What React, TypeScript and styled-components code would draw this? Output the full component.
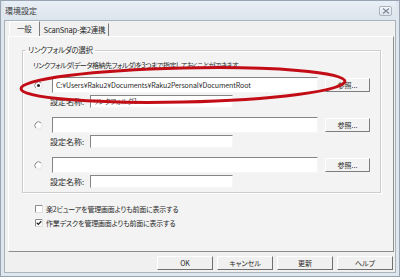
import React from "react";
import styled, { createGlobalStyle } from "styled-components";

const GlobalStyle = createGlobalStyle`
  html, body { margin: 0; padding: 0; background: #fff; }
  body {
    font-family: "Noto Sans CJK JP", "Liberation Sans", sans-serif;
    font-feature-settings: "palt";
    color: #2a2a2a;
  }
  * { box-sizing: border-box; }
`;

type FolderRow = { path: string; name: string; selected: boolean };

const rows: FolderRow[] = [
  { path: "C:¥Users¥Raku2¥Documents¥Raku2Personal¥DocumentRoot", name: "リンクフォルダ1", selected: true },
  { path: "", name: "", selected: false },
  { path: "", name: "", selected: false },
];

const Radio = ({ checked }: { checked: boolean }) => (
  <RadioIcon viewBox="0 0 9 9" width={9} height={9}>
    <circle cx="4.5" cy="4.5" r="3.6" fill="#fff" />
    <path d="M7.1 1.9 A3.6 3.6 0 0 0 1.9 7.1" fill="none" stroke="#8a8a8a" strokeWidth="1" />
    <path d="M1.9 7.1 A3.6 3.6 0 0 0 7.1 1.9" fill="none" stroke="#e2e2e2" strokeWidth="1" />
    {checked && <circle cx="4.5" cy="4.5" r="1.5" fill="#222" />}
  </RadioIcon>
);

const Check = ({ checked }: { checked: boolean }) => (
  <CheckIcon viewBox="0 0 8 8" width={8} height={8}>
    <rect x="0" y="0" width="8" height="8" fill="#fff" />
    <path d="M0.5 7.5 V0.5 H7.5" fill="none" stroke="#8a8a8a" strokeWidth="1" />
    <path d="M7.5 0.5 V7.5 H0.5" fill="none" stroke="#dcdcdc" strokeWidth="1" />
    {checked && <path d="M1.8 3.8 L3.3 5.4 L6.3 2.2" fill="none" stroke="#222" strokeWidth="1.3" />}
  </CheckIcon>
);

export default function App() {
  return (
    <>
      <GlobalStyle />
      <Window>
        <TitleBar>
          <Title>環境設定</Title>
          <CloseButton>
            <svg viewBox="0 0 8 6" width={8} height={6}>
              <path d="M1 0.5 L7 5.5 M7 0.5 L1 5.5" stroke="#7d8896" strokeWidth="1.2" />
            </svg>
          </CloseButton>
        </TitleBar>
        <Client>
          <TabStrip>
            <Tab $active>一般</Tab>
            <Tab>ScanSnap-楽2連携</Tab>
          </TabStrip>
          <Panel>
            <Group>
              <Legend>リンクフォルダの選択</Legend>
              <Description>リンクフォルダ(データ格納先フォルダ)を3つまで指定しておくことができます。</Description>
              {rows.map((r, i) => (
                <React.Fragment key={i}>
                  <PathRow $first={i === 0}>
                    <Radio checked={r.selected} />
                    <PathBox>{r.path}</PathBox>
                    <BrowseButton>参照...</BrowseButton>
                  </PathRow>
                  <NameRow>
                    <NameLabel>設定名称:</NameLabel>
                    <NameBox>{r.name}</NameBox>
                  </NameRow>
                </React.Fragment>
              ))}
            </Group>
            <CheckRow $first>
              <Check checked={false} />
              <span>楽2ビューアを管理画面よりも前面に表示する</span>
            </CheckRow>
            <CheckRow>
              <Check checked />
              <span>作業デスクを管理画面よりも前面に表示する</span>
            </CheckRow>
          </Panel>
          <Footer>
            <DialogButton>OK</DialogButton>
            <DialogButton>キャンセル</DialogButton>
            <DialogButton>更新</DialogButton>
            <DialogButton>ヘルプ</DialogButton>
          </Footer>
        </Client>
        <Annotation viewBox="0 0 400 277" width={400} height={277}>
          <ellipse cx="183" cy="85" rx="162" ry="17" transform="rotate(-1.3 183 85)"
            fill="none" stroke="#c30d16" strokeWidth="3" />
        </Annotation>
      </Window>
    </>
  );
}

const Window = styled.div`
  position: relative;
  width: 400px;
  height: 277px;
  border: 1px solid #98a4b2;
  background: #dfe6ee;
  padding: 0 3px 3px 3px;
  display: flex;
  flex-direction: column;
`;

const TitleBar = styled.div`
  height: 19px;
  flex: 0 0 19px;
  display: flex;
  align-items: center;
  justify-content: space-between;
  padding: 0 4px 0 1px;
  background: linear-gradient(#e9eff6, #dbe3ec);
`;

const Title = styled.span`
  font-size: 8px;
  line-height: 10px;
  color: #3a3a3a;
`;

const CloseButton = styled.div`
  width: 13px;
  height: 10px;
  border: 1px solid #aab4c0;
  border-radius: 2px;
  background: linear-gradient(#f4f7fa, #dfe5ec);
  display: flex;
  align-items: center;
  justify-content: center;
`;

const Client = styled.div`
  flex: 1;
  background: #f0f0f0;
  border: 1px solid #a9b3be;
  display: flex;
  flex-direction: column;
  padding: 0 1px 0 3px;
`;

const TabStrip = styled.div`
  height: 15px;
  display: flex;
  align-items: flex-end;
  padding-left: 1px;
`;

const Tab = styled.div<{ $active?: boolean }>`
  height: ${p => (p.$active ? 15 : 13)}px;
  padding: 0 ${p => (p.$active ? 7 : 3)}px;
  display: flex;
  align-items: center;
  font-size: 7.5px;
  line-height: 10px;
  letter-spacing: -0.2px;
  background: ${p => (p.$active ? "#f3f3f3" : "#f0f0f0")};
  border-left: 1px solid ${p => (p.$active ? "#ffffff" : "transparent")};
  border-top: 1px solid ${p => (p.$active ? "#ffffff" : "transparent")};
  border-right: 1px solid #7c7c7c;
`;

const Panel = styled.div`
  height: 216px;
  flex: 0 0 216px;
  border: 1px solid;
  border-color: #ffffff #8e8e8e #8e8e8e #ffffff;
  background: #f3f3f3;
  display: flex;
  flex-direction: column;
  padding: 0 12px 0 13px;
`;

const Group = styled.fieldset`
  margin: 8px 0 0 0;
  padding: 0 0 4px 10px;
  min-width: 0;
  border: 1px solid #cdcdcd;
  box-shadow: inset 1px 1px 0 #fff, 1px 1px 0 #fff;
`;

const Legend = styled.legend`
  margin-left: -7px;
  padding: 0 2px;
  font-size: 7.5px;
  line-height: 10px;
  letter-spacing: -0.3px;
`;

const Description = styled.div`
  margin-top: 5px;
  font-size: 7px;
  line-height: 10px;
  letter-spacing: -0.5px;
  white-space: nowrap;
`;

const PathRow = styled.div<{ $first?: boolean }>`
  margin-top: ${p => (p.$first ? 7 : 9)}px;
  height: 16px;
  display: flex;
  align-items: center;
  padding-left: 1px;
`;

const RadioIcon = styled.svg`
  flex: 0 0 9px;
  margin-right: 9px;
`;

const sunken = `
  background: #fff;
  border: 1px solid;
  border-color: #858585 #f6f6f6 #f6f6f6 #858585;
`;

const PathBox = styled.div`
  ${sunken};
  width: 266px;
  height: 16px;
  padding: 0 3px;
  font-size: 7px;
  line-height: 14px;
  letter-spacing: -0.1px;
  white-space: nowrap;
  overflow: hidden;
`;

const BrowseButton = styled.div`
  margin-left: 7px;
  width: 45px;
  height: 14px;
  border: 1px solid;
  border-color: #ffffff #7d7d7d #7d7d7d #ffffff;
  display: flex;
  align-items: center;
  justify-content: center;
  font-size: 7px;
`;

const NameRow = styled.div`
  margin-top: 2px;
  height: 13px;
  display: flex;
  align-items: center;
  padding-left: 17px;
`;

const NameLabel = styled.span`
  width: 40px;
  font-size: 8px;
  line-height: 10px;
`;

const NameBox = styled.div`
  ${sunken};
  width: 143px;
  height: 13px;
  padding: 0 2px;
  font-size: 7px;
  line-height: 11px;
  letter-spacing: -0.3px;
  color: #4a4a4a;
`;

const CheckRow = styled.div<{ $first?: boolean }>`
  margin-top: ${p => (p.$first ? 11 : 4)}px;
  height: 10px;
  display: flex;
  align-items: center;
  gap: 3px;
  padding-left: 13px;
  font-size: 7px;
  line-height: 10px;
  letter-spacing: -0.2px;
`;

const CheckIcon = styled.svg`
  flex: 0 0 8px;
`;

const Footer = styled.div`
  flex: 1;
  display: flex;
  justify-content: flex-end;
  align-items: flex-start;
  gap: 4px;
  padding: 4px 1px 0 0;
`;

const DialogButton = styled.div`
  width: 56px;
  height: 14px;
  border: 1px solid;
  border-color: #ffffff #6f6f6f #6f6f6f #ffffff;
  display: flex;
  align-items: center;
  justify-content: center;
  font-size: 7px;
`;

const Annotation = styled.svg`
  position: absolute;
  left: -1px;
  top: -1px;
  pointer-events: none;
`;
